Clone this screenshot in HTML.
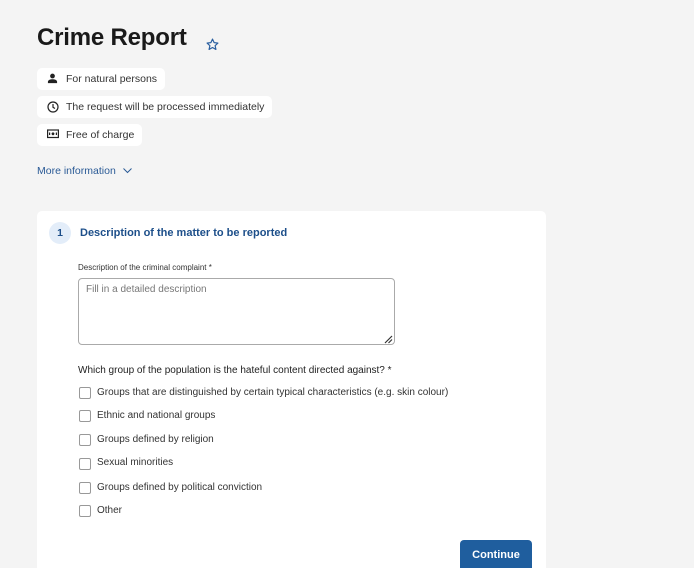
<!DOCTYPE html>
<html style="width:694px;height:568px;overflow:hidden"><head><meta charset="utf-8"><style>
body{margin:0;width:694px;height:568px;background:#f4f4f4;font-family:"Liberation Sans",sans-serif;position:relative;overflow:hidden;color:#222}
.abs{position:absolute}
h1{position:absolute;left:37px;top:24px;margin:0;font-size:24px;font-weight:bold;color:#1a1a1a;letter-spacing:-0.2px}
.chip{position:absolute;left:37px;height:22px;background:#fff;border-radius:5px;font-size:10.5px;color:#333;line-height:22px;padding-left:29px;padding-right:8px}
.chip svg{position:absolute;left:10px;top:5px}
.card{position:absolute;left:37px;top:211px;width:509px;height:357px;background:#fff;border-radius:5px 5px 0 0}
.cb{position:absolute;left:79px;width:10px;height:10px;border:1px solid #999;border-radius:2px}
.lbl{position:absolute;left:97px;font-size:10px;color:#333}
</style></head><body>
<h1>Crime Report</h1>
<svg class="abs" style="left:206px;top:38px" width="13" height="13" viewBox="0 0 24 24"><path d="M12 2l3 6.5 7 .8-5.2 4.8 1.5 7L12 17.6 5.7 21.1l1.5-7L2 9.3l7-.8z" fill="none" stroke="#2a5fa0" stroke-width="2.2" stroke-linejoin="round"/></svg>
<div class="chip" style="top:68px">For natural persons<svg width="11" height="11" viewBox="0 0 12 12"><circle cx="6" cy="3.3" r="2.6" fill="#222"/><path d="M1 11v-1.5C1 7.5 4 6.8 6 6.8s5 .7 5 2.7V11z" fill="#222"/></svg></div>
<div class="chip" style="top:96px">The request will be processed immediately<svg width="12" height="12" viewBox="0 0 12 12"><circle cx="6" cy="6" r="5" fill="none" stroke="#222" stroke-width="1.2"/><path d="M6 3v3.3l2 1.2" fill="none" stroke="#222" stroke-width="1.2"/></svg></div>
<div class="chip" style="top:124px">Free of charge<svg width="12" height="10" viewBox="0 0 12 10"><rect x="0.6" y="1" width="10.8" height="7.5" fill="none" stroke="#222" stroke-width="1.2"/><circle cx="6" cy="4.8" r="1.4" fill="#222"/><rect x="2" y="3.5" width="1.2" height="2.5" fill="#222"/><rect x="8.8" y="3.5" width="1.2" height="2.5" fill="#222"/></svg></div>
<div class="abs" style="left:37px;top:165px;font-size:10.5px;color:#2a5a96">More information</div>
<svg class="abs" style="left:123px;top:168px" width="9" height="6" viewBox="0 0 9 6"><path d="M.5 .5l4 4 4-4" fill="none" stroke="#2a5a96" stroke-width="1"/></svg>
<div class="card"></div>
<div class="abs" style="left:49px;top:222px;width:22px;height:22px;border-radius:50%;background:#e3edf9;font-size:10.5px;font-weight:bold;color:#1d4f8a;text-align:center;line-height:22px">1</div>
<div class="abs" style="left:80px;top:227px;font-size:11px;font-weight:bold;color:#1d4f8a">Description of the matter to be reported</div>
<div class="abs" style="left:78px;top:263px;font-size:8px;color:#333">Description of the criminal complaint *</div>
<div class="abs" style="left:78px;top:278px;width:317px;height:67px;border:1px solid #aaa;border-radius:4px;box-sizing:border-box"></div>
<div class="abs" style="left:86px;top:284px;font-size:10px;color:#777">Fill in a detailed description</div>
<svg class="abs" style="left:384px;top:335px" width="9" height="9" viewBox="0 0 9 9"><path d="M1 8L8 1M4.5 8L8 4.5" stroke="#333" stroke-width="1.2"/></svg>
<div class="abs" style="left:78px;top:365px;font-size:10px;color:#222">Which group of the population is the hateful content directed against? *</div>
<div class="cb" style="top:387px"></div><div class="lbl" style="top:387px">Groups that are distinguished by certain typical characteristics (e.g. skin colour)</div>
<div class="cb" style="top:410px"></div><div class="lbl" style="top:410px">Ethnic and national groups</div>
<div class="cb" style="top:434px"></div><div class="lbl" style="top:434px">Groups defined by religion</div>
<div class="cb" style="top:458px"></div><div class="lbl" style="top:457px">Sexual minorities</div>
<div class="cb" style="top:482px"></div><div class="lbl" style="top:482px">Groups defined by political conviction</div>
<div class="cb" style="top:505px"></div><div class="lbl" style="top:505px">Other</div>
<div class="abs" style="left:460px;top:540px;width:72px;height:34px;background:#1f5e9e;border-radius:4px;color:#fff;font-size:11px;font-weight:bold;text-align:center;line-height:30px">Continue</div>
</body></html>
